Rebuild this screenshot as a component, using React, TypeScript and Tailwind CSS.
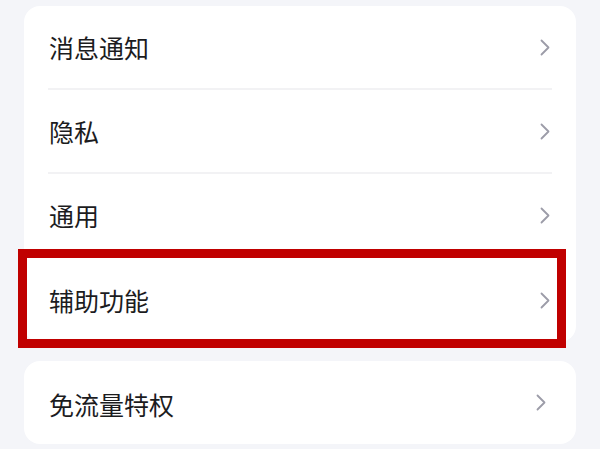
const MAIN_ITEMS = ['消息通知', '隐私', '通用', '辅助功能'];

function Chevron() {
    return (
        <svg width="10" height="17" viewBox="0 0 10 17" fill="none">
            <path d="M1.5 1.5L8.5 8.5L1.5 15.5" stroke="#9c9ca8" strokeWidth="1.8" strokeLinecap="round" strokeLinejoin="round" />
        </svg>
    );
}

export default function App() {
    return (
        <div
            className="relative w-[600px] h-[449px] overflow-hidden bg-[#f4f5f9] pt-[6px] px-6"
            style={{ fontFamily: '"Noto Sans CJK SC", "Noto Sans", sans-serif' }}
        >
            {/* Main settings group */}
            <div className="bg-white rounded-2xl">
                {MAIN_ITEMS.map((label, i) => (
                    <div key={label} className="px-6">
                        <div
                            className={`h-[84px] flex items-center justify-between pr-[2px] ${i < MAIN_ITEMS.length - 1 ? 'border-b-2 border-[#f2f2f4]' : ''}`}
                        >
                            <span className="text-[25px] leading-none text-[#1c1c1e] pl-px pt-[1px]">{label}</span>
                            <Chevron />
                        </div>
                    </div>
                ))}
            </div>

            {/* Free data group */}
            <div className="mt-[19px] bg-white rounded-2xl">
                <div className="h-[83px] flex items-center justify-between pl-6 pr-[30px]">
                    <span className="text-[25px] leading-none text-[#1c1c1e] pl-px pt-[3px]">免流量特权</span>
                    <Chevron />
                </div>
            </div>

            {/* Highlight box */}
            <div className="absolute left-[18px] top-[249px] w-[548px] h-[99px] border-[9px] border-[#c00000]" />
        </div>
    );
}
